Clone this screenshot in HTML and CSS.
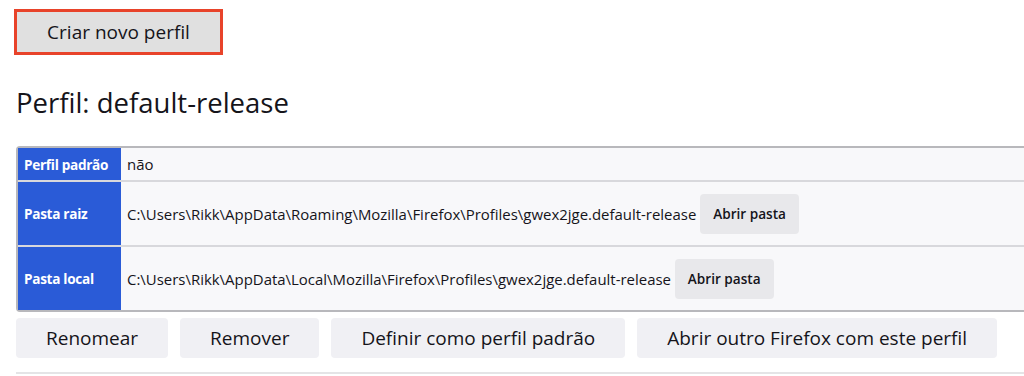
FILE: index.html
```html
<!DOCTYPE html>
<html lang="pt-BR">
<head>
  <meta charset="UTF-8" />
  <title>Sobre os perfis</title>
  <link rel="stylesheet" href="styles.css">
</head>
<body>
  <div class="top">
    <button class="btn btn-new">Criar novo perfil</button>
  </div>

  <h2>Perfil: default-release</h2>

  <table class="profile">
    <tr>
      <th>Perfil padrão</th>
      <td class="short">não</td>
    </tr>
    <tr>
      <th>Pasta raiz</th>
      <td>C:\Users\Rikk\AppData\Roaming\Mozilla\Firefox\Profiles\gwex2jge.default-release <button class="btn btn-small">Abrir pasta</button></td>
    </tr>
    <tr>
      <th>Pasta local</th>
      <td>C:\Users\Rikk\AppData\Local\Mozilla\Firefox\Profiles\gwex2jge.default-release <button class="btn btn-small">Abrir pasta</button></td>
    </tr>
  </table>

  <div class="actions">
    <button class="btn">Renomear</button>
    <button class="btn">Remover</button>
    <button class="btn">Definir como perfil padrão</button>
    <button class="btn">Abrir outro Firefox com este perfil</button>
  </div>

  <hr>
</body>
</html>
```

FILE: styles.css
```css
* {
  box-sizing: border-box;
}

html, body {
  overflow: hidden;
}

body {
  margin: 0;
  padding: 0 0 0 16px;
  font-family: "Open Sans", "Noto Sans", sans-serif;
  color: #15141a;
  background: #fff;
  width: 1024px;
}

.top {
  padding-top: 9px;
}

.btn {
  font-family: inherit;
  font-size: 19px;
  color: #15141a;
  background: #f0f0f4;
  border: none;
  border-radius: 4px;
  height: 40px;
  padding: 0 30px;
}

.btn-new {
  margin-left: -2px;
  height: 46px;
  width: 209px;
  padding: 0;
  background: #e0e0e0;
  border: 3px solid #e8432a;
  border-radius: 0;
}

h2 {
  margin: 30px 0 25px;
  font-size: 27.5px;
  font-weight: 400;
  line-height: 36px;
}

.profile {
  border-collapse: separate;
  border-spacing: 0;
  border: 2px solid #b8b8bc;
  border-right: none;
  border-radius: 4px 0 0 4px;
  width: 1030px;
  font-size: 14.95px;
}

.profile th {
  background: #2a5bd7;
  color: #fff;
  text-align: left;
  font-size: 13.6px;
  font-weight: 700;
  letter-spacing: -0.3px;
  padding: 0 5px 0 6px;
  width: 103px;
  white-space: nowrap;
  border-top: 2px solid #d8d8dc;
}

.profile td {
  background: #f8f8fa;
  padding: 11px 6px;
  height: 65px;
  border-top: 2px solid #d8d8dc;
  white-space: nowrap;
}

.profile tr:first-child th,
.profile tr:first-child td {
  border-top: none;
}

.profile td.short {
  height: 32px;
  padding: 0 6px;
}

.btn-small {
  font-size: 13.6px;
  font-weight: 600;
  height: 40px;
  padding: 0 13px;
  background: #e8e8eb;
  margin-left: 0;
}

.actions {
  display: flex;
  gap: 12px;
  margin-top: 6px;
}

hr {
  margin: 14px 0 0;
  border: none;
  border-top: 2px solid #e4e4e6;
}
```
